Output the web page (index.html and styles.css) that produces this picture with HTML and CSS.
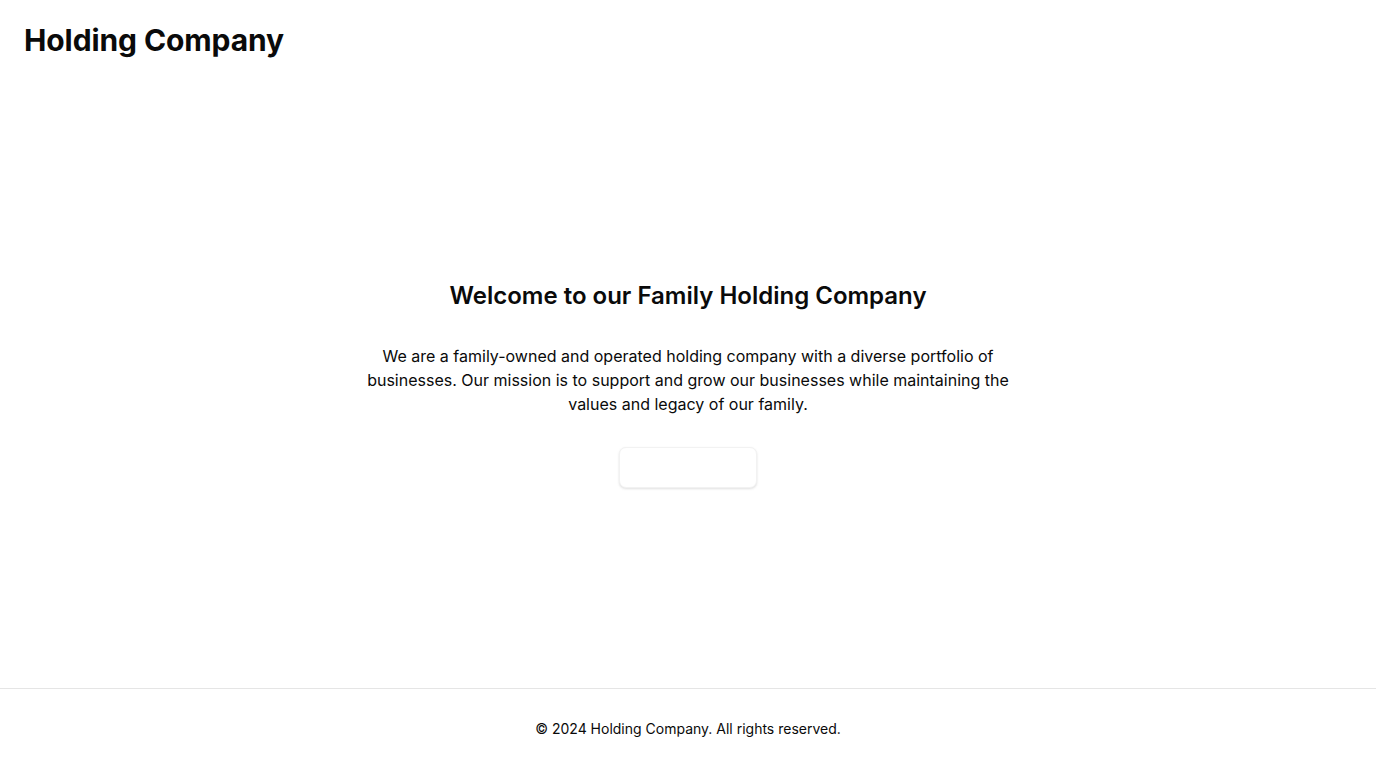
FILE: index.html
```html
<!DOCTYPE html>
<html lang="en">
<head>
<meta charset="utf-8">
<title>Holding Company</title>
<link rel="stylesheet" href="styles.css">
</head>
<body>
<div class="page">
  <header class="site-header">
    <h1 class="brand">Holding Company</h1>
  </header>
  <main class="hero">
    <h2 class="hero-title">Welcome to our Family Holding Company</h2>
    <p class="hero-text">We are a family-owned and operated holding company with a diverse portfolio of businesses. Our mission is to support and grow our businesses while maintaining the values and legacy of our family.</p>
    <button class="hero-button" type="button">Learn More</button>
  </main>
  <footer class="site-footer">
    <p>© 2024 Holding Company. All rights reserved.</p>
  </footer>
</div>
</body>
</html>
```

FILE: styles.css
```css
* { box-sizing: border-box; }
html, body { margin: 0; padding: 0; }
body {
  font-family: Inter, "Noto Sans", sans-serif;
  color: #0a0a0a;
  background: #ffffff;
}
.page {
  min-height: 768px;
  display: flex;
  flex-direction: column;
}
.site-header {
  height: 80px;
  padding: 22px 24px;
}
.brand {
  margin: 0;
  font-size: 30px;
  line-height: 36px;
  font-weight: 700;
  letter-spacing: -0.1px;
}
.hero {
  flex: 1;
  display: flex;
  flex-direction: column;
  align-items: center;
  justify-content: center;
  gap: 32px;
  text-align: center;
}
.hero-title {
  margin: 0;
  font-size: 24px;
  line-height: 32px;
  font-weight: 600;
}
.hero-text {
  margin: 0;
  max-width: 672px;
  font-size: 16px;
  line-height: 24px;
}
.hero-button {
  width: 138px;
  height: 41px;
  margin-top: -1px;
  border: 1px solid #f2f2f2;
  border-radius: 7px;
  background: #ffffff;
  color: #ffffff;
  font-family: inherit;
  font-size: 14px;
  font-weight: 500;
  box-shadow: 0 1px 3px rgba(0,0,0,0.08), 0 1px 2px rgba(0,0,0,0.05);
}
.site-footer {
  height: 80px;
  border-top: 1px solid #e5e5e5;
  display: flex;
  align-items: center;
  justify-content: center;
}
.site-footer p {
  margin: 0;
  font-size: 14px;
  line-height: 20px;
}
```
